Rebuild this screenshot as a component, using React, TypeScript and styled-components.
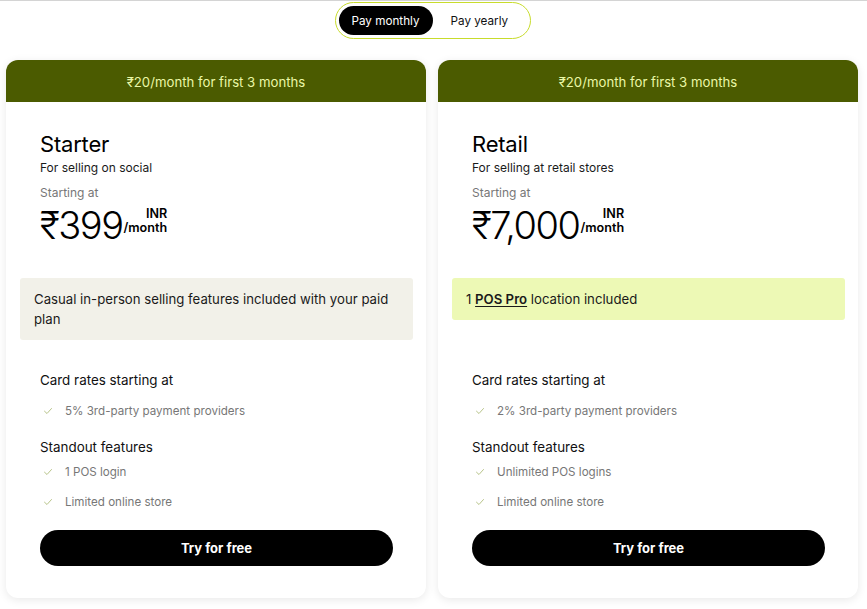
import styled, { createGlobalStyle } from 'styled-components';

const GlobalStyle = createGlobalStyle`
  html, body {
    margin: 0;
    padding: 0;
    background: #ffffff;
    font-family: Inter, 'Noto Sans', sans-serif;
    color: #000;
  }
`;

type Plan = {
  name: string;
  tagline: string;
  price: string;
  note: React.ReactNode;
  highlight: boolean;
  rate: string;
  features: string[];
};

const plans: Plan[] = [
  {
    name: 'Starter',
    tagline: 'For selling on social',
    price: '₹399',
    note: 'Casual in-person selling features included with your paid plan',
    highlight: false,
    rate: '5% 3rd-party payment providers',
    features: ['1 POS login', 'Limited online store'],
  },
  {
    name: 'Retail',
    tagline: 'For selling at retail stores',
    price: '₹7,000',
    note: (
      <>
        1 <u>POS Pro</u> location included
      </>
    ),
    highlight: true,
    rate: '2% 3rd-party payment providers',
    features: ['Unlimited POS logins', 'Limited online store'],
  },
];

function Check() {
  return (
    <svg width="10" height="10" viewBox="0 0 10 10" fill="none">
      <path d="M1.5 5.2 L4 7.5 L8.5 2.5" stroke="#b8c48a" strokeWidth="1" strokeLinecap="round" strokeLinejoin="round" />
    </svg>
  );
}

function App() {
  return (
    <Page>
      <GlobalStyle />
      <ToggleRow>
        <Toggle>
          <ToggleOption $active>Pay monthly</ToggleOption>
          <ToggleOption>Pay yearly</ToggleOption>
        </Toggle>
      </ToggleRow>
      <CardGrid>
        {plans.map((p) => (
          <Card key={p.name}>
            <Banner>₹20/month for first 3 months</Banner>
            <Body>
              <Title>{p.name}</Title>
              <Tagline>{p.tagline}</Tagline>
              <Starting>Starting at</Starting>
              <PriceRow>
                <Price>{p.price}</Price>
                <Unit>
                  <span>INR</span>
                  <span>/month</span>
                </Unit>
              </PriceRow>
              <NoteArea>
                <Note $highlight={p.highlight}>{p.note}</Note>
              </NoteArea>
              <SectionTitle>Card rates starting at</SectionTitle>
              <List $top={6} $bottom={11}>
                <Item>
                  <Check />
                  {p.rate}
                </Item>
              </List>
              <SectionTitle>Standout features</SectionTitle>
              <List $top={0} $bottom={13}>
                {p.features.map((f) => (
                  <Item key={f}>
                    <Check />
                    {f}
                  </Item>
                ))}
              </List>
              <CTA>Try for free</CTA>
            </Body>
          </Card>
        ))}
      </CardGrid>
    </Page>
  );
}

const Page = styled.div`
  border-top: 1px solid #d4d4d4;
  padding: 1px 9px 10px 6px;
`;

const ToggleRow = styled.div`
  display: flex;
  justify-content: center;
  padding-left: 1px;
  margin-bottom: 21px;
`;

const Toggle = styled.div`
  display: flex;
  padding: 3px;
  border: 1px solid #c8dc2c;
  border-radius: 20px;
  width: 188px;
`;

const ToggleOption = styled.div<{ $active?: boolean }>`
  height: 29px;
  padding: 0 13px;
  display: flex;
  align-items: center;
  border-radius: 15px;
  font-size: 11.7px;
  background: ${(p) => (p.$active ? '#000' : 'transparent')};
  color: ${(p) => (p.$active ? '#fff' : '#111')};
  margin-right: ${(p) => (p.$active ? '5px' : '0')};
`;

const CardGrid = styled.div`
  display: grid;
  grid-template-columns: 420px 420px;
  gap: 12px;
`;

const Card = styled.div`
  background: #fff;
  border-radius: 12px;
  overflow: hidden;
  box-shadow: 0 2px 10px rgba(0, 0, 0, 0.09);
  height: 538px;
`;

const Banner = styled.div`
  height: 42px;
  box-sizing: border-box;
  padding-top: 1px;
  display: flex;
  align-items: center;
  justify-content: center;
  background: #4b5b00;
  color: #eaf7a6;
  font-size: 13.2px;
`;

const Body = styled.div`
  padding: 29px 33px 0 34px;
  display: flex;
  flex-direction: column;
`;

const Title = styled.div`
  font-size: 22px;
  line-height: 26px;
  letter-spacing: -0.2px;
`;

const Tagline = styled.div`
  margin-top: 2px;
  font-size: 12px;
  line-height: 18px;
  color: #1a1a1a;
`;

const Starting = styled.div`
  margin-top: 7px;
  font-size: 12px;
  line-height: 18px;
  color: #777;
`;

const PriceRow = styled.div`
  display: flex;
  align-items: flex-start;
  margin-top: 1px;
`;

const Price = styled.div`
  font-size: 38px;
  line-height: 44px;
  font-weight: 300;
  letter-spacing: -1.5px;
`;

const Unit = styled.div`
  display: flex;
  flex-direction: column;
  align-items: flex-end;
  margin: 4px 0 0 1px;
  font-size: 12.6px;
  font-weight: 600;
  line-height: 14px;
`;

const NoteArea = styled.div`
  margin: 31px -20px 0 -20px;
  height: 92px;
`;

const Note = styled.div<{ $highlight: boolean }>`
  background: ${(p) => (p.$highlight ? '#edf9b5' : '#f2f1e9')};
  border-radius: 3px;
  padding: 11px 14px;
  font-size: 13.2px;
  line-height: 20px;
  color: #1a1a1a;

  u {
    font-weight: 600;
    text-underline-offset: 2px;
  }
`;

const SectionTitle = styled.div`
  font-size: 13.4px;
  line-height: 20px;
  color: #111;
`;

const List = styled.ul<{ $top: number; $bottom: number }>`
  list-style: none;
  margin: ${(p) => `${p.$top}px 0 ${p.$bottom}px`};
  padding: 0;
`;

const Item = styled.li`
  display: flex;
  align-items: center;
  gap: 12px;
  height: 30px;
  padding-left: 3px;
  font-size: 11.6px;
  color: #777;
`;

const CTA = styled.button`
  height: 36px;
  border: none;
  border-radius: 18px;
  background: #000;
  color: #fff;
  font-family: Inter, sans-serif;
  font-size: 13px;
  font-weight: 700;
  cursor: pointer;
`;

export default App;
